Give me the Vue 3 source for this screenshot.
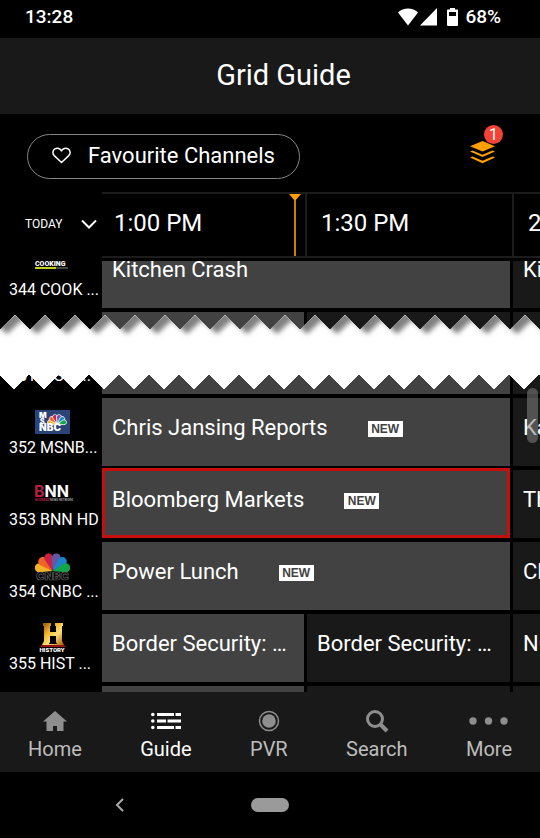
<template>
    <div class="app">
        <div class="status-bar">
            <span>13:28</span>
            <div class="status-right">
                <svg class="wifi" viewBox="0 0 20 18">
                    <path d="M0 4.5C5-.8 15-.8 20 4.5L10 17.5z" fill="#fff" />
                </svg>
                <svg class="signal" viewBox="0 0 17 18">
                    <path d="M17 0v17.5H0z" fill="#fff" />
                </svg>
                <svg class="battery" viewBox="0 0 11 18">
                    <path
                        d="M3 0h5v1.500h2q1 0 1 1v14.500q0 1-1 1H1q-1 0-1-1V2.500q0-1 1-1h2zM2 4v4h7V4z"
                        fill="#fff"
                        fill-rule="evenodd"
                    />
                </svg>
                <span>68%</span>
            </div>
        </div>

        <header class="title-bar">
            <h1>Grid Guide</h1>
        </header>

        <div class="toolbar">
            <button type="button" class="favourites">
                <svg viewBox="0 0 19 17">
                    <path
                        d="M9.500 15.500L2.200 8.600C.2 6.500.6 3.300 2.900 1.900 5.300.5 8.200 1.400 9.500 3.900 10.800 1.400 13.700.5 16.100 1.900c2.300 1.400 2.700 4.600.7 6.700z"
                        fill="none"
                        stroke="#fff"
                        stroke-width="1.500"
                        stroke-linejoin="round"
                    />
                </svg>
                Favourite Channels
            </button>
            <button type="button" class="layers" aria-label="Filters">
                <svg viewBox="0 0 25 23">
                    <path d="M12.500 0L25 5.300 12.500 10.600 0 5.300z" />
                    <path d="M0 10.500l2.500-1 10 4.300 10-4.300 2.500 1-12.500 5.600z" />
                    <path d="M0 16.500l2.500-1 10 4.300 10-4.300 2.500 1-12.500 5.700z" />
                </svg>
                <span class="badge">1</span>
            </button>
        </div>

        <div class="time-bar">
            <button type="button" class="day">
                TODAY
                <svg viewBox="0 0 16 10">
                    <path d="M1 1.500l7 7 7-7" fill="none" stroke="#fff" stroke-width="2" />
                </svg>
            </button>
            <div class="times">
                <div v-for="time in times" :key="time" class="time">{{ time }}</div>
                <svg class="now" viewBox="0 0 12 62">
                    <path d="M0 0h12L6.800 6v56H5.200V6z" fill="#ffa000" />
                </svg>
            </div>
        </div>

        <section
            v-for="(group, index) in groups"
            :key="index"
            :class="['guide', index === 0 ? 'guide-top' : 'guide-rest']"
        >
            <div v-for="row in group" :key="row.label" class="row">
                <div class="channel">
                    <div class="logo">
                        <svg v-if="row.logo === 'cooking'" viewBox="0 0 36 28">
                            <text x="0" y="16" font-size="7" font-weight="900" fill="#fff">COOKING</text>
                            <rect x="0" y="17" width="21" height="2" fill="#c4cf22" />
                            <rect x="21" y="17" width="12" height="2" fill="#444" />
                        </svg>
                        <svg v-else-if="row.logo === 'msnbc'" viewBox="0 0 36 28">
                            <rect y="2" width="35" height="24" fill="#2b4478" />
                            <g transform="translate(22 16) scale(.5)">
                                <path
                                    v-for="petal in petals"
                                    :key="petal.angle"
                                    :d="petalPath"
                                    :fill="petal.color"
                                    :transform="`rotate(${petal.angle})`"
                                    stroke="#fff"
                                    stroke-width="1.500"
                                />
                            </g>
                            <g fill="#fff" font-weight="900" class="logo-text">
                                <text x="4" y="10" font-size="8">M</text>
                                <text x="5" y="16" font-size="7">S</text>
                                <text x="4" y="23" font-size="10">NBC</text>
                            </g>
                        </svg>
                        <svg v-else-if="row.logo === 'bnn'" viewBox="0 0 36 28">
                            <text
                                x="-1"
                                y="17"
                                font-size="16"
                                font-weight="700"
                                fill="#fff"
                                class="logo-text"
                            ><tspan fill="#b51f3d">B</tspan>NN</text>
                            <text
                                x="0"
                                y="21"
                                font-size="3"
                                font-weight="700"
                                fill="#999"
                            ><tspan fill="#b51f3d">BUSINESS</tspan> NEWS NETWORK</text>
                        </svg>
                        <svg v-else-if="row.logo === 'cnbc'" viewBox="0 0 36 28">
                            <g transform="translate(17.500 19) scale(.93)">
                                <path
                                    v-for="petal in petals"
                                    :key="petal.angle"
                                    :d="petalPath"
                                    :fill="petal.color"
                                    :transform="`rotate(${petal.angle})`"
                                />
                            </g>
                            <text
                                x="17.500"
                                y="28"
                                font-size="11"
                                font-weight="900"
                                text-anchor="middle"
                                fill="#000"
                                stroke="#666"
                                stroke-width=".7"
                                class="logo-text"
                            >CNBC</text>
                        </svg>
                        <svg v-else-if="row.logo === 'history'" viewBox="0 0 36 30">
                            <defs>
                                <linearGradient id="gold" x1="0" y1="0" x2="1" y2="1">
                                    <stop offset="0" stop-color="#8a4a08" />
                                    <stop offset=".35" stop-color="#f7b52c" />
                                    <stop offset=".6" stop-color="#ffe07a" />
                                    <stop offset="1" stop-color="#a85708" />
                                </linearGradient>
                            </defs>
                            <path
                                d="M8 0h8v3h-1v6h6V3h-1V0h8v3h-1v15l2 4H7l2-4V3H8zM15 13v6l-1 2h8l-1-2v-6z"
                                fill="url(#gold)"
                                fill-rule="evenodd"
                            />
                            <path d="M7 22h22l2 2H5z" fill="#9b1414" />
                            <text x="17" y="29" font-size="6" font-weight="900" text-anchor="middle" fill="#fff">HISTORY</text>
                        </svg>
                    </div>
                    <div class="channel-name">{{ row.label }}</div>
                </div>
                <div class="programmes">
                    <button
                        v-for="(show, i) in row.shows"
                        :key="i"
                        type="button"
                        :class="['show', { wide: show.wide, live: i === 0, selected: show.selected }]"
                    >
                        {{ show.title }}
                        <span v-if="show.isNew" class="new">NEW</span>
                    </button>
                </div>
            </div>
            <div v-if="index === 1" class="scroll-thumb"></div>
        </section>

        <nav class="tabs">
            <a v-for="tab in tabs" :key="tab" href="#" :class="['tab', { active: tab === 'Guide' }]">
                <svg v-if="tab === 'Home'" viewBox="0 0 24 24" class="icon">
                    <path d="M12 2l12 10.500h-3.500V22H14v-5h-4v5H3.500v-9.500H0z" />
                </svg>
                <svg v-else-if="tab === 'Guide'" viewBox="0 0 30 24" class="icon icon-wide">
                    <circle cx="1.800" cy="5.500" r="1.800" />
                    <circle cx="1.800" cy="12" r="1.800" />
                    <circle cx="1.800" cy="18.500" r="1.800" />
                    <path d="M6 4h17v3H6zM24.500 4H30v3h-5.500zM6 10.500h9v3H6zM16.500 10.500H30v3H16.500zM6 17h17v3H6zM24.500 17H30v3h-5.500z" />
                </svg>
                <svg v-else-if="tab === 'PVR'" viewBox="0 0 24 24" class="icon">
                    <circle cx="12" cy="12" r="9.500" fill="none" stroke="#8e8e8e" stroke-width="1.500" />
                    <circle cx="12" cy="12" r="6.800" />
                </svg>
                <svg v-else-if="tab === 'Search'" viewBox="0 0 24 24" class="icon">
                    <circle cx="10" cy="10" r="7.500" fill="none" stroke="#8e8e8e" stroke-width="3" />
                    <path d="M15 15l7 7" stroke="#8e8e8e" stroke-width="4" />
                </svg>
                <svg v-else viewBox="0 0 39 24" class="icon icon-more">
                    <circle cx="4" cy="12" r="3.700" />
                    <circle cx="19.500" cy="12" r="3.700" />
                    <circle cx="35" cy="12" r="3.700" />
                </svg>
                {{ tab }}
            </a>
        </nav>

        <div class="system-bar">
            <button type="button" class="back" aria-label="Back">
                <svg viewBox="0 0 9 14">
                    <path d="M8 1L2 7l6 6" fill="none" stroke="#aaa" stroke-width="2" />
                </svg>
            </button>
            <button type="button" class="pill" aria-label="Home screen"></button>
        </div>

        <!-- torn strip where rows are left out -->
        <svg class="tear">
            <defs>
                <clipPath id="strip">
                    <polygon :points="stripPoints" />
                </clipPath>
                <filter id="soft" x="-5%" y="-50%" width="110%" height="200%">
                    <feGaussianBlur stdDeviation="2.500" />
                </filter>
            </defs>
            <polygon :points="stripPoints" fill="#fff" shape-rendering="crispEdges" />
            <g clip-path="url(#strip)">
                <polygon :points="shadowPoints" fill="#808080" filter="url(#soft)" />
            </g>
        </svg>
    </div>
</template>

<script setup>
const times = ["1:00 PM", "1:30 PM", "2:00 PM"];
const tabs = ["Home", "Guide", "PVR", "Search", "More"];

// rows above and below the torn strip
const groups = [
    [
        {
            label: "344 COOK ...",
            logo: "cooking",
            shows: [{ title: "Kitchen Crash", wide: true }, { title: "Kitchen Crash" }],
        },
        { label: "", shows: [{ title: "" }, { title: "" }, { title: "" }] },
    ],
    [
        { label: "351 MSG ...", shows: [{ title: "", wide: true }, { title: "" }] },
        {
            label: "352 MSNB...",
            logo: "msnbc",
            shows: [{ title: "Chris Jansing Reports", wide: true, isNew: true }, { title: "Katy Tur" }],
        },
        {
            label: "353 BNN HD",
            logo: "bnn",
            shows: [
                { title: "Bloomberg Markets", wide: true, isNew: true, selected: true },
                { title: "The Close" },
            ],
        },
        {
            label: "354 CNBC ...",
            logo: "cnbc",
            shows: [{ title: "Power Lunch", wide: true, isNew: true }, { title: "Closing Bell" }],
        },
        {
            label: "355 HIST ...",
            logo: "history",
            shows: [{ title: "Border Security: …" }, { title: "Border Security: …" }, { title: "NCIS" }],
        },
        { label: "", shows: [{ title: "" }, { title: "" }, { title: "" }] },
    ],
];

const petalPath = "M0 0L-4.500-13A4.800 4.800 0 1 1 4.500-13z";
const petals = [
    { angle: -76, color: "#f0b32b" },
    { angle: -46, color: "#f16523" },
    { angle: -16, color: "#c8224b" },
    { angle: 16, color: "#6558a5" },
    { angle: 46, color: "#1c84c8" },
    { angle: 76, color: "#12a54a" },
];

// zigzag edges, one tooth every 30px
const teeth = 80;
const topEdge = [];
const bottomEdge = [];
const shadowEdge = [];
for (let i = 0; i < teeth; i++) {
    const x = i * 30;
    topEdge.push(`${x},14`, `${x + 15},0`);
    bottomEdge.push(`${x - 1},60`, `${x + 14},74`);
    shadowEdge.push(`${x + 7},19`, `${x + 22},5`);
}
const stripPoints = [...topEdge, ...bottomEdge.reverse()].join(" ");
const shadowPoints = ["-30,-20", "-30,5", "-8,5", ...shadowEdge, "2400,-20"].join(" ");
</script>

<style>
body {
    background: #000;
}
</style>

<style scoped>
.app {
    display: grid;
    grid-template-rows: auto auto auto auto auto 46px minmax(0, 1fr) auto auto;
    grid-template-columns: minmax(0, 1fr);
    height: 100vh;
    overflow: hidden;
    background: #000;
    color: #fff;
    font-family: Roboto, "Liberation Sans", sans-serif;
}
button {
    margin: 0;
    padding: 0;
    border: 0;
    background: none;
    color: inherit;
    font-family: inherit;
    cursor: pointer;
}
svg {
    display: block;
    flex: none;
}
.status-bar {
    grid-row: 1;
    display: flex;
    justify-content: space-between;
    height: 38px;
    padding: 0 39px 0 25px;
    font-size: 19px;
    font-weight: 500;
    line-height: 34px;
}
.status-right {
    display: flex;
    align-items: center;
    height: 34px;
}
.wifi {
    width: 20px;
    height: 18px;
    margin-right: 2px;
}
.signal {
    width: 17px;
    height: 18px;
    margin-right: 10px;
}
.battery {
    width: 11px;
    height: 18px;
    margin-right: 7px;
}
.title-bar {
    grid-row: 2;
    display: flex;
    align-items: center;
    justify-content: center;
    height: 74px;
    padding: 0 0 2px 27px;
    background: #191919;
}
.title-bar h1 {
    margin: 0;
    font-size: 29px;
    font-weight: 400;
}
.toolbar {
    grid-row: 3;
    display: flex;
    justify-content: space-between;
    align-items: flex-start;
    padding: 20px 45px 13px 27px;
}
.favourites {
    display: flex;
    align-items: center;
    gap: 17px;
    height: 45px;
    padding: 0 24px 2px;
    border: 1px solid #858585;
    border-radius: 23px;
    font-size: 22px;
}
.favourites svg {
    width: 19px;
    height: 17px;
}
.layers {
    position: relative;
    display: flex;
    align-items: center;
    height: 36px;
}
.layers svg {
    width: 25px;
    height: 23px;
    fill: #ffa000;
}
.badge {
    position: absolute;
    top: -9px;
    right: -8px;
    width: 19px;
    height: 19px;
    border-radius: 50%;
    background: #f44336;
    font-size: 16px;
    line-height: 19px;
    text-align: center;
}
.time-bar {
    grid-row: 4;
    display: flex;
}
.day {
    display: flex;
    align-items: center;
    justify-content: space-between;
    width: 102px;
    padding: 0 5px 3px 25px;
    font-size: 12px;
}
.day svg {
    width: 16px;
    height: 10px;
}
.times {
    position: relative;
    flex: 1;
    display: grid;
    grid-template-columns: minmax(0, 203fr) minmax(0, 207fr) minmax(0, 28fr);
    border-top: 2px solid #1c1c1c;
    border-bottom: 2px solid #1c1c1c;
}
.time {
    height: 62px;
    padding-left: 14px;
    overflow: hidden;
    border-left: 2px solid #1c1c1c;
    font-size: 24px;
    line-height: 58px;
    white-space: nowrap;
}
.time:first-child {
    padding-left: 12px;
    border-left: 0;
}
.now {
    position: absolute;
    top: 0;
    left: 44%;
    width: 12px;
    height: 62px;
    transform: translateX(-50%);
}
.guide {
    position: relative;
    overflow: hidden;
}
.guide-top {
    grid-row: 5;
    height: 68px;
    margin-top: 3px;
}
.guide-rest {
    grid-row: 7;
}
/* both lists are scrolled part of the way through their first row */
.guide-top .row:first-child {
    margin-top: -21px;
}
.guide-rest .row:first-child {
    margin-top: -49px;
}
.row {
    display: flex;
    height: 68px;
    margin-bottom: 4px;
}
.channel {
    width: 102px;
    padding: 9px 3px 0 9px;
    box-sizing: border-box;
}
.logo {
    display: flex;
    align-items: center;
    height: 30px;
    padding-left: 26px;
}
.logo svg {
    width: 36px;
    height: 30px;
    overflow: visible;
}
.logo-text {
    font-family: Inter, "Liberation Sans", sans-serif;
}
.channel-name {
    overflow: hidden;
    font-size: 16px;
    line-height: 22px;
    white-space: nowrap;
}
.programmes {
    flex: 1;
    display: grid;
    grid-template-columns: minmax(0, 202fr) minmax(0, 203fr) minmax(0, 27fr);
    column-gap: 3px;
}
.show {
    display: flex;
    align-items: flex-start;
    padding: 17px 0 0 10px;
    overflow: hidden;
    background: #191919;
    font-size: 22px;
    line-height: 26px;
    text-align: left;
    white-space: nowrap;
}
.show.live {
    background: #424242;
}
.show.wide {
    grid-column: span 2;
}
.show.selected {
    margin: -2px 0 0;
    padding: 16px 0 0 7px;
    border: 3px solid #c80d0d;
}
.new {
    margin: 6px 0 0 40px;
    width: 35px;
    background: #fff;
    color: #424242;
    font: bold 12px/16px "Liberation Sans", sans-serif;
    text-align: center;
}
.scroll-thumb {
    position: absolute;
    top: 13px;
    right: 2px;
    width: 11px;
    height: 55px;
    border-radius: 6px;
    background: rgba(130, 130, 130, 0.55);
}
.tear {
    grid-row: 6;
    grid-column: 1;
    width: 100%;
    height: 74px;
    margin: -14px 0;
    z-index: 1;
}
.tabs {
    grid-row: 8;
    display: flex;
    justify-content: space-between;
    padding: 17px 28px 11px;
    background: #191919;
}
.tab {
    display: flex;
    flex-direction: column;
    align-items: center;
    gap: 4px;
    color: #bdbdbd;
    font-size: 20px;
    line-height: 24px;
    text-decoration: none;
}
.tab.active {
    color: #fff;
}
.icon {
    width: 24px;
    height: 24px;
    fill: #8e8e8e;
}
.icon-wide {
    width: 30px;
    fill: #fff;
}
.icon-more {
    width: 39px;
}
.system-bar {
    grid-row: 9;
    display: grid;
    grid-template-columns: 1fr auto 1fr;
    align-items: center;
    height: 66px;
}
.back {
    justify-self: center;
    padding-right: 12px;
}
.back svg {
    width: 9px;
    height: 14px;
}
.pill {
    width: 38px;
    height: 14px;
    border-radius: 7px;
    background: #9a9a9a;
}
</style>
